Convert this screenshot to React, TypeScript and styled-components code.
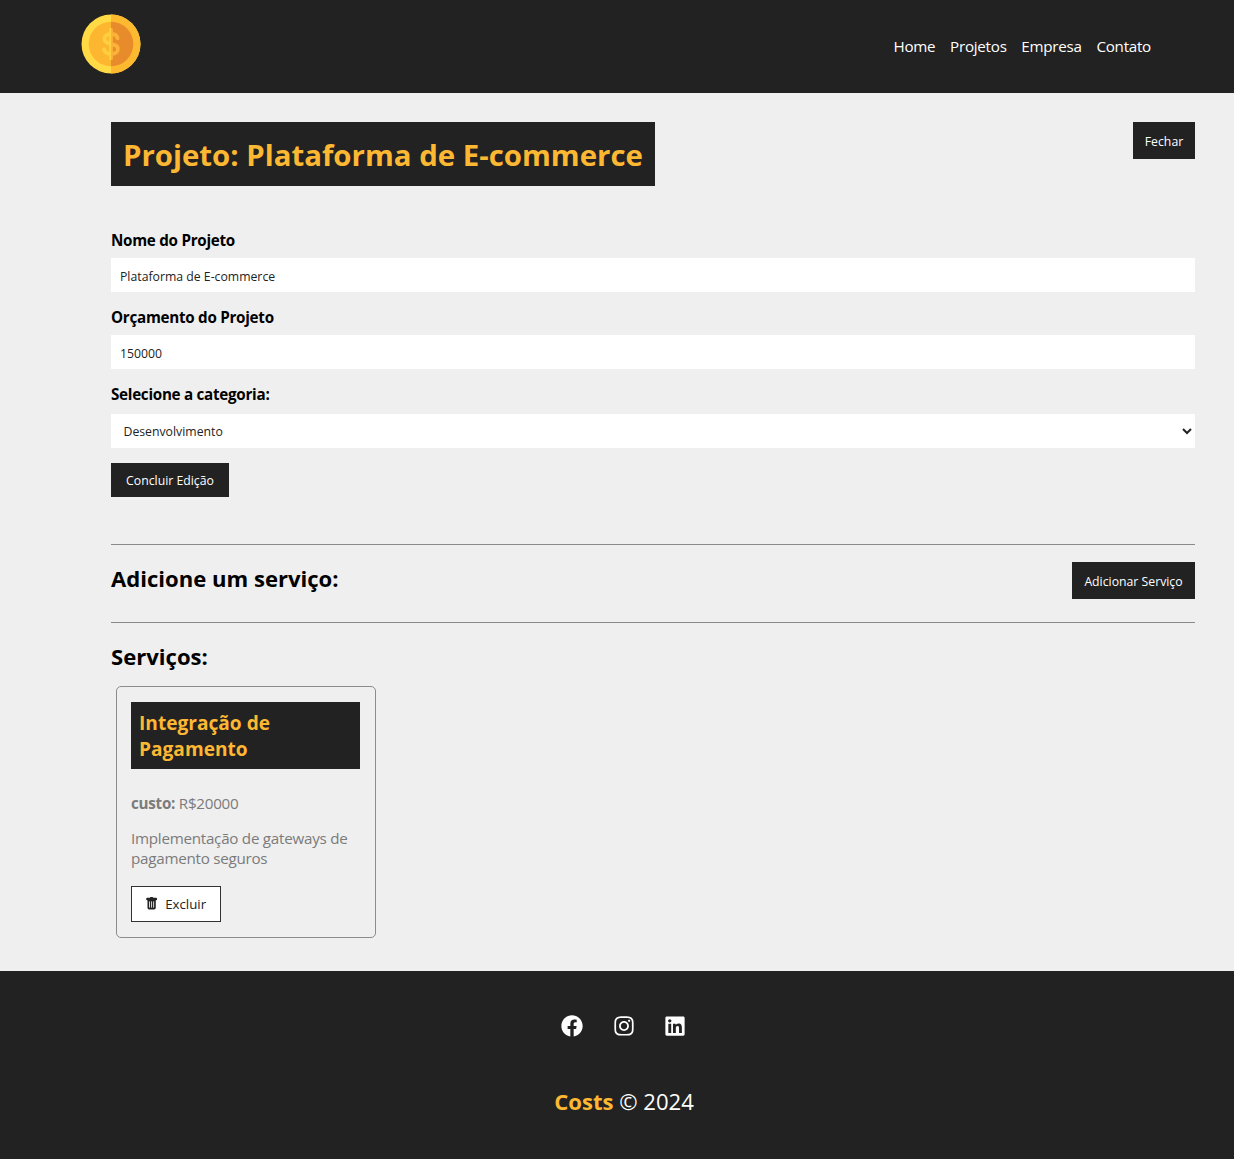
import React from "react";
import styled, { createGlobalStyle } from "styled-components";
import { FaFacebook, FaInstagram, FaLinkedin } from "react-icons/fa";
import { BsFillTrashFill } from "react-icons/bs";

const Global = createGlobalStyle`
  * { box-sizing: border-box; margin: 0; padding: 0; }
  body { background: #efefef; font-family: "Open Sans", sans-serif; font-size: 14.72px; line-height: 20px; color: #000; }
  input, select, button { font-family: inherit; font-size: 12.25px; }
`;

const Page = styled.div`
  min-height: 1159px;
  display: flex;
  flex-direction: column;
`;

const Header = styled.header`
  height: 93px;
  padding: 14px 83px 0 81px;
  background: #222;
  display: flex;
  justify-content: space-between;
  align-items: flex-start;
`;

const Nav = styled.nav`
  display: flex;
  gap: 14.7px;
  margin-top: 22px;
`;

const NavLink = styled.a`
  color: #fff;
  font-size: 15.2px;
  letter-spacing: -0.26px;
`;

const Main = styled.main`
  height: 878px;
  padding: 29px 39px 0 111px;
`;

const Row = styled.div<{ $height: number }>`
  display: flex;
  justify-content: space-between;
  align-items: flex-start;
  height: ${(p) => p.$height}px;
`;

const Title = styled.h1`
  height: 64px;
  padding: 13px 12px 0;
  background: #222;
  color: #fdb833;
  font-size: 29.4px;
  line-height: 40px;
`;

const Button = styled.button<{ $width: number; $height?: number }>`
  width: ${(p) => p.$width}px;
  height: ${(p) => p.$height ?? 37}px;
  padding-top: 2px;
  border: 0;
  background: #222;
  color: #fff;
  white-space: nowrap;
`;

const Form = styled.form`
  height: 314px;
`;

const Field = styled.div`
  display: flex;
  flex-direction: column;
  gap: 7px;
  margin-bottom: 15px;
`;

const Label = styled.label`
  font-size: 15.2px;
  letter-spacing: -0.27px;
  font-weight: 700;
  line-height: 21.2px;
`;

const Input = styled.input`
  height: 34px;
  padding: 2px 9px 0;
  border: 0;
  background: #fff;
  color: #222;
`;

const Select = styled.select`
  height: 34px;
  margin-top: 1px;
  padding: 1px 0 0 8.5px;
  border: 0;
  border-radius: 0;
  background-color: #fff;
  color: #222;
`;

const Section = styled.section<{ $height?: number }>`
  border-top: 1px solid #8a8a8a;
  padding-top: 17px;
  ${(p) => p.$height && `height: ${p.$height}px;`}
`;

const Heading = styled.h2`
  font-size: 22.08px;
  line-height: 30px;
  margin-top: 1px;
`;

const Card = styled.article`
  width: 260px;
  height: 252px;
  margin: 15px 0 0 5px;
  padding: 15px 15px 0 14px;
  border: 1px solid #8c8c8c;
  border-radius: 5px;
  color: #7b7b7b;
`;

const CardTitle = styled.h3`
  height: 67px;
  padding: 8px 8px 0;
  margin-bottom: 24px;
  background: #222;
  color: #fdb833;
  font-size: 19.13px;
  line-height: 26px;
`;

const CardText = styled.p`
  margin-bottom: 15px;
  font-size: 15.2px;
  letter-spacing: -0.26px;
  line-height: 20.2px;
`;

const RemoveButton = styled.button`
  display: flex;
  align-items: center;
  justify-content: center;
  gap: 7px;
  width: 90px;
  height: 36px;
  padding-right: 1px;
  margin-top: 17px;
  border: 1px solid #333;
  background: #fff;
  color: #222;
  && { font-size: 13.25px; }
`;

const Footer = styled.footer`
  flex: 1;
  padding: 44px 0 0 14px;
  background: #222;
  color: #fff;
  display: flex;
  flex-direction: column;
  align-items: center;
`;

const Social = styled.div`
  display: flex;
  gap: 29.5px;
  font-size: 22px;
  margin: 0 1px 49px 0;
`;

const Copyright = styled.p`
  font-size: 22.08px;
  line-height: 30px;
`;

const Brand = styled.span`
  font-weight: 700;
  color: #fdb833;
`;

const dollar =
  "M36.6 24.4c-.5-2.8-3-4.4-6.6-4.4-3.9 0-6.6 1.9-6.6 4.8 0 6.8 13.5 3.4 13.5 10.2 0 3-2.8 4.9-6.9 4.9-3.6 0-6.3-1.7-6.9-4.6M30 15.6v28.8";

const Coin = () => (
  <svg width="60" height="60" viewBox="0 0 60 60">
    <clipPath id="left-half">
      <rect width="30" height="60" />
    </clipPath>
    <circle cx="30" cy="30" r="29.5" fill="#ffda44" />
    <path d="M30 .5a29.5 29.5 0 0 1 0 59z" fill="#fdb92f" />
    <circle cx="30" cy="30" r="22.3" fill="#fdb62f" />
    <path d="M30 7.7a22.3 22.3 0 0 1 0 44.6z" fill="#e78b2b" />
    <g fill="none" strokeWidth="3.8" strokeLinecap="round">
      <path d={dollar} stroke="#fbb236" />
      <path d={dollar} stroke="#ffcf3f" clipPath="url(#left-half)" />
    </g>
  </svg>
);

export default function App() {
  return (
    <Page>
      <Global />
      <Header>
        <Coin />
        <Nav>
          {["Home", "Projetos", "Empresa", "Contato"].map((item) => (
            <NavLink key={item}>{item}</NavLink>
          ))}
        </Nav>
      </Header>
      <Main>
        <Row $height={108}>
          <Title>Projeto: Plataforma de E-commerce</Title>
          <Button $width={62}>Fechar</Button>
        </Row>
        <Form onSubmit={(e) => e.preventDefault()}>
          <Field>
            <Label htmlFor="name">Nome do Projeto</Label>
            <Input id="name" defaultValue="Plataforma de E-commerce" />
          </Field>
          <Field>
            <Label htmlFor="budget">Orçamento do Projeto</Label>
            <Input id="budget" type="number" defaultValue="150000" />
          </Field>
          <Field>
            <Label htmlFor="category">Selecione a categoria:</Label>
            <Select id="category">
              <option>Desenvolvimento</option>
            </Select>
          </Field>
          <Button $width={118} $height={34}>Concluir Edição</Button>
        </Form>
        <Section $height={78}>
          <Row $height={37}>
            <Heading>Adicione um serviço:</Heading>
            <Button $width={123}>Adicionar Serviço</Button>
          </Row>
        </Section>
        <Section>
          <Heading>Serviços:</Heading>
          <Card>
            <CardTitle>Integração de Pagamento</CardTitle>
            <CardText>
              <b>custo:</b> R$20000
            </CardText>
            <CardText>Implementação de gateways de pagamento seguros</CardText>
            <RemoveButton>
              <BsFillTrashFill /> Excluir
            </RemoveButton>
          </Card>
        </Section>
      </Main>
      <Footer>
        <Social>
          <FaFacebook />
          <FaInstagram />
          <FaLinkedin />
        </Social>
        <Copyright>
          <Brand>Costs</Brand> © 2024
        </Copyright>
      </Footer>
    </Page>
  );
}
